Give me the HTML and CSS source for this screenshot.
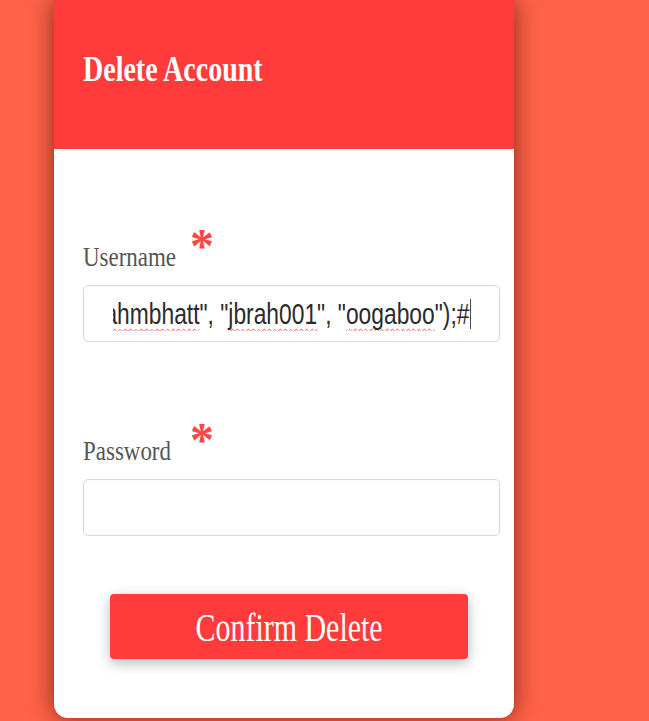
FILE: index.html
```html
<!DOCTYPE html>
<html lang="en">
<head>
<meta charset="utf-8">
<title>Delete Account</title>
<link rel="stylesheet" href="styles.css">
</head>
<body>
<div class="card">
  <div class="card-header">
    <h1 class="title"><span class="sq-h">Delete Account</span></h1>
  </div>
  <form class="card-body">
    <div class="field">
      <div class="label-row">
        <span class="label sq">Username</span>
        <span class="req">*</span>
      </div>
      <div class="input">
        <div class="clip">
          <div class="value"><span class="spell">brahmbhatt</span>", "<span class="spell">jbrah001</span>", "<span class="spell">oogaboo</span>");#<span class="caret"></span></div>
        </div>
      </div>
    </div>
    <div class="field field-2">
      <div class="label-row">
        <span class="label sq">Password</span>
        <span class="req">*</span>
      </div>
      <div class="input"></div>
    </div>
    <div class="actions">
      <button type="button" class="btn"><span class="sq-c">Confirm Delete</span></button>
    </div>
  </form>
</div>
</body>
</html>
```

FILE: styles.css
```css
html, body {
  margin: 0;
  padding: 0;
  height: 100%;
}
body {
  background: #ff6347;
  font-family: "Liberation Serif", "Times New Roman", serif;
  overflow: hidden;
}
.card {
  margin-left: 54px;
  width: 460px;
  height: 718px;
  background: #ffffff;
  border-radius: 0 0 14px 14px;
  box-shadow: 0 0 24px rgba(80, 18, 8, 0.7);
  overflow: hidden;
}
.card-header {
  height: 149px;
  background: #ff3b3b;
  display: flex;
  align-items: center;
  padding-left: 29px;
}
.title {
  margin: 0;
  color: #ffffff;
  font-size: 35px;
  font-weight: bold;
  line-height: 1;
  position: relative;
  top: -5px;
}
.sq-h {
  display: inline-block;
  transform: scaleX(0.8);
  transform-origin: left center;
  white-space: nowrap;
}
.sq {
  display: inline-block;
  transform: scaleX(0.85);
  transform-origin: left center;
  white-space: nowrap;
}
.sq-c {
  display: inline-block;
  transform: scaleX(0.73);
  transform-origin: center center;
  white-space: nowrap;
}
.card-body {
  padding: 82px 14px 0 29px;
  margin: 0;
}
.field-2 {
  margin-top: 83px;
}
.label-row {
  display: flex;
  align-items: flex-start;
  height: 54px;
}
.label {
  font-size: 27px;
  color: #555555;
  line-height: 1;
  margin-top: 13px;
  width: 110px;
}
.req {
  color: #ff4545;
  font-size: 48px;
  line-height: 1;
  margin-left: -3px;
  margin-top: -9px;
  font-weight: bold;
}
.input {
  height: 55px;
  border: 1px solid #d9d9d9;
  border-radius: 5px;
  box-shadow: inset 0 0 2px rgba(0,0,0,0.06);
  display: flex;
  align-items: center;
}
.clip {
  margin-left: 29px;
  margin-right: 28px;
  flex: 1;
  overflow: hidden;
  display: flex;
  justify-content: flex-end;
}
.value {
  font-family: "Liberation Sans", Arial, sans-serif;
  font-size: 30px;
  color: #2a2a2a;
  white-space: nowrap;
  transform: scaleX(0.76);
  transform-origin: right center;
  flex-shrink: 0;
  position: relative;
}
.spell {
  text-decoration: underline wavy #ee4444;
  text-decoration-thickness: 1px;
  text-underline-offset: 4px;
  text-decoration-skip-ink: none;
}
.caret {
  display: inline-block;
  width: 1px;
  height: 30px;
  background: #111111;
  vertical-align: -5px;
  margin-left: 1px;
}
.actions {
  display: flex;
  padding-left: 27px;
  margin-top: 58px;
}
.btn {
  width: 358px;
  height: 65px;
  border: none;
  border-radius: 4px;
  background: #ff3b3b;
  color: #ffffff;
  font-family: "Liberation Serif", "Times New Roman", serif;
  font-size: 41px;
  padding: 0;
  box-shadow: 0 4px 14px rgba(0,0,0,0.28);
  cursor: pointer;
}
```
